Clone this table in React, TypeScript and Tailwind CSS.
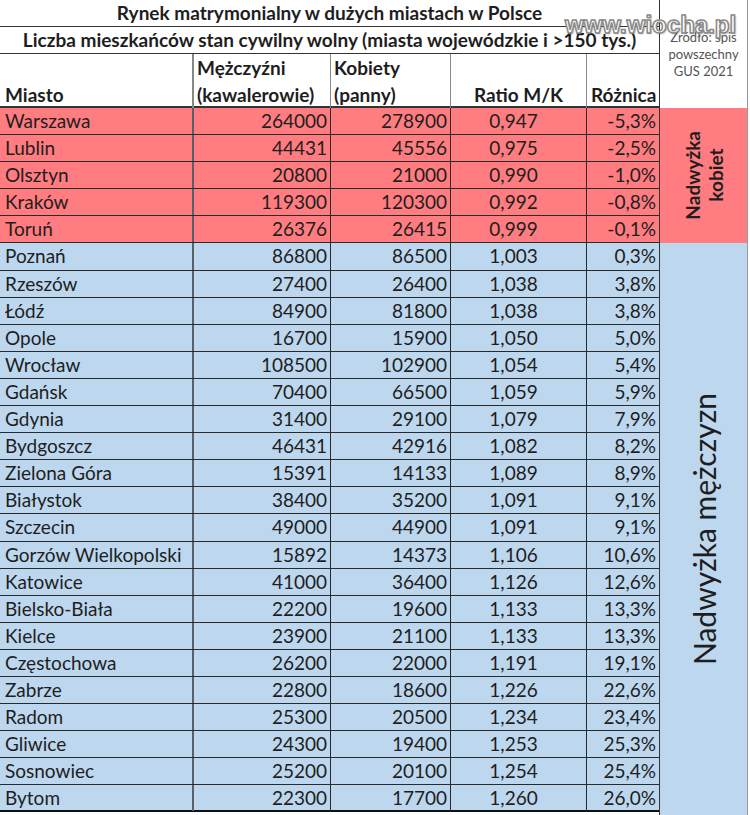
import React from 'react';

// Rows of the table: city, men, women, ratio, difference
const rows: [string, string, string, string, string][] = [
  ['Warszawa', '264000', '278900', '0,947', '-5,3%'],
  ['Lublin', '44431', '45556', '0,975', '-2,5%'],
  ['Olsztyn', '20800', '21000', '0,990', '-1,0%'],
  ['Kraków', '119300', '120300', '0,992', '-0,8%'],
  ['Toruń', '26376', '26415', '0,999', '-0,1%'],
  ['Poznań', '86800', '86500', '1,003', '0,3%'],
  ['Rzeszów', '27400', '26400', '1,038', '3,8%'],
  ['Łódź', '84900', '81800', '1,038', '3,8%'],
  ['Opole', '16700', '15900', '1,050', '5,0%'],
  ['Wrocław', '108500', '102900', '1,054', '5,4%'],
  ['Gdańsk', '70400', '66500', '1,059', '5,9%'],
  ['Gdynia', '31400', '29100', '1,079', '7,9%'],
  ['Bydgoszcz', '46431', '42916', '1,082', '8,2%'],
  ['Zielona Góra', '15391', '14133', '1,089', '8,9%'],
  ['Białystok', '38400', '35200', '1,091', '9,1%'],
  ['Szczecin', '49000', '44900', '1,091', '9,1%'],
  ['Gorzów Wielkopolski', '15892', '14373', '1,106', '10,6%'],
  ['Katowice', '41000', '36400', '1,126', '12,6%'],
  ['Bielsko-Biała', '22200', '19600', '1,133', '13,3%'],
  ['Kielce', '23900', '21100', '1,133', '13,3%'],
  ['Częstochowa', '26200', '22000', '1,191', '19,1%'],
  ['Zabrze', '22800', '18600', '1,226', '22,6%'],
  ['Radom', '25300', '20500', '1,234', '23,4%'],
  ['Gliwice', '24300', '19400', '1,253', '25,3%'],
  ['Sosnowiec', '25200', '20100', '1,254', '25,4%'],
  ['Bytom', '22300', '17700', '1,260', '26,0%'],
];

const grid = 'grid grid-cols-[194px_137px_120px_136px_72px]';

const App: React.FC = () => {
  return (
    <div
      className="relative w-[750px] h-[815px] bg-white text-[#1e1e1e] overflow-hidden"
      style={{ fontFamily: 'Lato, "Noto Sans", sans-serif' }}
    >
      <div className="flex">
        {/* Main table */}
        <div className="w-[659px] flex flex-col">
          <div className="h-[27px] border-b border-[#333] flex items-center justify-center font-bold text-[19px]">
            Rynek matrymonialny w dużych miastach w Polsce
          </div>
          <div className="h-[27px] border-b border-[#333] flex items-center justify-center font-bold text-[19px] whitespace-nowrap">
            Liczba mieszkańców stan cywilny wolny (miasta wojewódzkie i &gt;150 tys.)
          </div>

          {/* Header */}
          <div className={`${grid} h-[54px] border-b-2 border-[#333] font-bold text-[19px] leading-[27px]`}>
            <div className="flex items-end px-[5px] border-r-2 border-[#888]">Miasto</div>
            <div className="flex flex-col justify-end px-[3px] border-r border-[#888] whitespace-nowrap">
              <span>Mężczyźni</span>
              <span>(kawalerowie)</span>
            </div>
            <div className="flex flex-col justify-end px-[3px] border-r border-[#888]">
              <span>Kobiety</span>
              <span>(panny)</span>
            </div>
            <div className="flex items-end justify-center border-r border-[#888]">Ratio M/K</div>
            <div className="flex items-end px-[4px]">Różnica</div>
          </div>

          {/* Data rows */}
          {rows.map((r, i) => (
            <div
              key={r[0]}
              className={`${grid} h-[27.1px] border-b border-[#2a2a2a] text-[19px] leading-[26px] ${
                i < 5 ? 'bg-[#ff7c80]' : 'bg-[#bdd7ee]'
              } ${i === rows.length - 1 ? 'border-b-2 border-b-[#111]' : ''}`}
            >
              <div className="px-[5px] border-r-2 border-[#5a5f66] whitespace-nowrap">{r[0]}</div>
              <div className="text-right pr-[3px] border-r border-[#2a2a2a]">{r[1]}</div>
              <div className="text-right pr-[3px] border-r border-[#2a2a2a]">{r[2]}</div>
              <div className="text-center pr-[10px] border-r border-[#2a2a2a]">{r[3]}</div>
              <div className="text-right pr-[3px]">{r[4]}</div>
            </div>
          ))}
        </div>

        {/* Side column */}
        <div className="w-[89px] flex flex-col border-l border-[#333] border-r border-r-[#999]">
          <div className="h-[108px] flex flex-col items-center pt-[29px] text-[13px] leading-[17px] text-[#555]">
            <span>Źródło: spis</span>
            <span>powszechny</span>
            <span>GUS 2021</span>
          </div>
          <div className="h-[135px] bg-[#ff7c80] flex items-center justify-center">
            <div className="[writing-mode:vertical-rl] rotate-180 font-bold text-[19px] leading-[23px] text-center text-[#1e1e1e]">
              Nadwyżka
              <br />
              kobiet
            </div>
          </div>
          <div className="h-[572px] bg-[#bdd7ee] flex items-center justify-center">
            <div className="[writing-mode:vertical-rl] rotate-180 text-[30px] leading-none text-[#1e1e1e]">
              Nadwyżka mężczyzn
            </div>
          </div>
        </div>
      </div>

      {/* Watermark overlay */}
      <div
        className="absolute left-[565px] top-[13px] text-[24px] leading-none font-bold text-white [-webkit-text-stroke:1.5px_#8a8a8a] [text-shadow:1px_1px_2px_rgba(0,0,0,0.35)]"
        style={{ fontFamily: '"Liberation Sans", Arial, sans-serif' }}
      >
        www.wiocha.pl
      </div>
    </div>
  );
};

export default App;
